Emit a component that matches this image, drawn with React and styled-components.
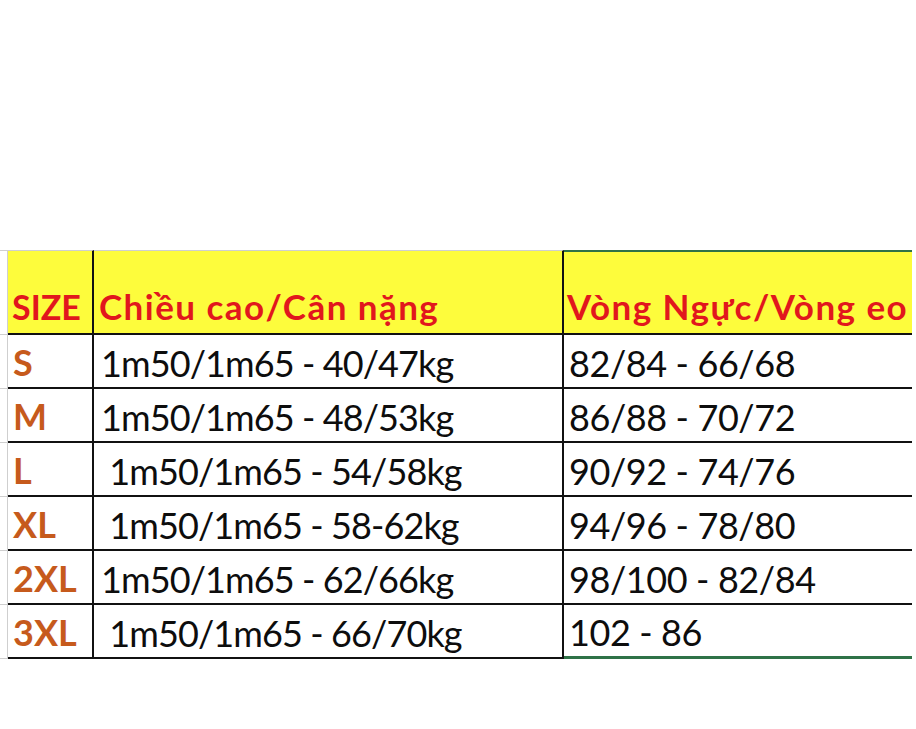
import React from 'react'
import styled, { createGlobalStyle } from 'styled-components'

const GlobalStyle = createGlobalStyle`
  html, body {
    margin: 0;
    padding: 0;
    background: #ffffff;
  }
  body {
    font-family: Lato, "Noto Sans", sans-serif;
  }
`

const GRID = '#cfcfcf'
const INK = '#111111'
const SELECT = '#2f7247'

const Page = styled.div`
  width: 916px;
  height: 729px;
  padding-top: 250px;
  box-sizing: border-box;
`

const Sheet = styled.div`
  display: grid;
  grid-template-columns: 8px 86px 470px 348px;
  grid-template-rows: 85px repeat(6, 54px);
  width: 912px;
`

const Gutter = styled.div`
  box-sizing: border-box;
  border-right: 1px solid ${GRID};
  border-bottom: 1px solid ${GRID};
  border-top: ${(p) => (p.$head ? `1px solid ${GRID}` : 'none')};
`

const Cell = styled.div`
  box-sizing: border-box;
  display: flex;
  align-items: flex-end;
  overflow: hidden;
  white-space: pre;
  line-height: 1;
  background: ${(p) => (p.$head ? '#fdfc3c' : '#ffffff')};
  border-top: ${(p) =>
    p.$head ? (p.$selected ? `2px solid ${SELECT}` : `1px solid ${GRID}`) : 'none'};
  border-right: ${(p) => (p.$last ? 'none' : `2px solid ${INK}`)};
  border-bottom: ${(p) => (p.$selected && p.$bottom ? `3px solid ${SELECT}` : `2px solid ${INK}`)};
  padding-left: ${(p) => p.$indent || 0}px;
`

const HeadText = styled.span`
  font-weight: 700;
  font-size: ${(p) => (p.$tight ? 34 : 35)}px;
  letter-spacing: ${(p) => (p.$tight ? 0 : 1.45)}px;
  color: #e1171d;
  padding-bottom: 9px;
`

const SizeText = styled.span`
  font-weight: 700;
  font-size: 36px;
  color: #c65a1c;
  padding-bottom: 7px;
`

const ValueText = styled.span`
  font-weight: 400;
  font-size: 36px;
  letter-spacing: ${(p) => (p.$narrow ? -0.9 : -0.4)}px;
  color: #0d0d0d;
  padding-bottom: 6px;
`

const rows = [
  { size: 'S', body: '1m50/1m65 - 40/47kg', chest: '82/84 - 66/68' },
  { size: 'M', body: '1m50/1m65 - 48/53kg', chest: '86/88 - 70/72' },
  { size: 'L', body: ' 1m50/1m65 - 54/58kg', chest: '90/92 - 74/76' },
  { size: 'XL', body: ' 1m50/1m65 - 58-62kg', chest: '94/96 - 78/80' },
  { size: '2XL', body: '1m50/1m65 - 62/66kg', chest: '98/100 - 82/84' },
  { size: '3XL', body: ' 1m50/1m65 - 66/70kg', chest: '102 - 86' },
]

export default function App() {
  return (
    <>
      <GlobalStyle />
      <Page>
        <Sheet>
          <Gutter $head />
          <Cell $head $indent={4}>
            <HeadText $tight>SIZE</HeadText>
          </Cell>
          <Cell $head $indent={5}>
            <HeadText>Chiều cao/Cân nặng</HeadText>
          </Cell>
          <Cell $head $selected $last $indent={3}>
            <HeadText>Vòng Ngực/Vòng eo</HeadText>
          </Cell>

          {rows.map((r, i) => {
            const bottom = i === rows.length - 1
            return (
              <React.Fragment key={r.size}>
                <Gutter />
                <Cell $indent={5}>
                  <SizeText>{r.size}</SizeText>
                </Cell>
                <Cell $indent={7}>
                  <ValueText $narrow>{r.body}</ValueText>
                </Cell>
                <Cell $last $selected={bottom} $bottom={bottom} $indent={5}>
                  <ValueText>{r.chest}</ValueText>
                </Cell>
              </React.Fragment>
            )
          })}
        </Sheet>
      </Page>
    </>
  )
}
